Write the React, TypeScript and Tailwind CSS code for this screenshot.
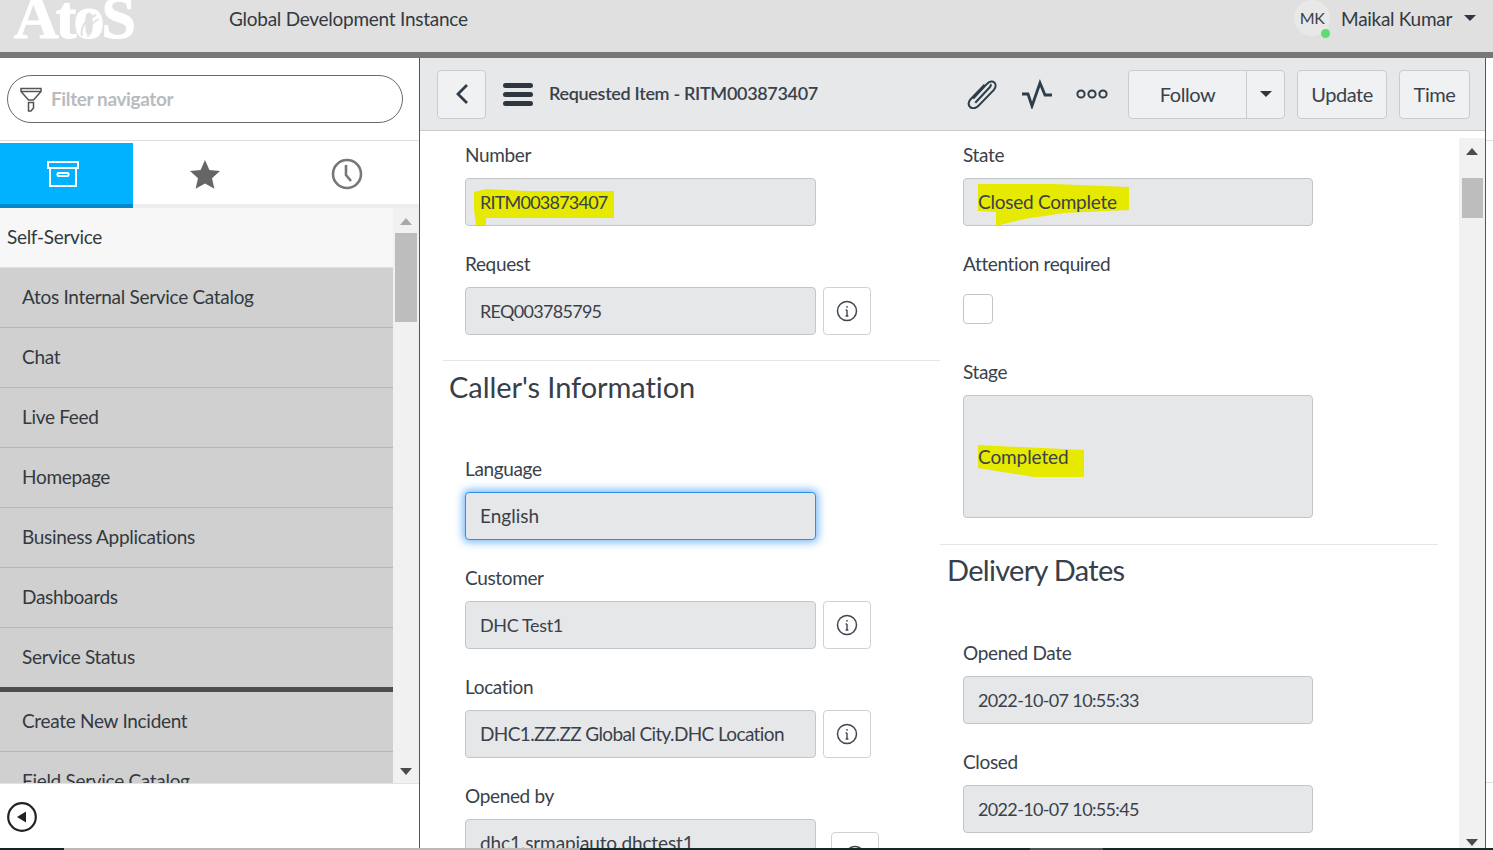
import React from "react";

const font = { fontFamily: '"Lato", "Noto Sans", sans-serif' };

function InfoBtn({ className = "" }: { className?: string }) {
  return (
    <div className={`w-12 h-12 shrink-0 bg-white border border-[#cfd2d5] rounded-[4px] flex items-center justify-center ${className}`}>
      <svg width="22" height="22" viewBox="0 0 22 22" fill="none" stroke="#3f4650" strokeWidth="1.5">
        <circle cx="11" cy="11" r="9.500" />
        <path d="M11 10v6M9.600 10H11M9.600 16h2.800" strokeWidth="1.400" />
        <circle cx="11" cy="6.800" r="0.900" fill="#3f4650" stroke="none" />
      </svg>
    </div>
  );
}

function Mark({ points, w, h }: { points: string; w: number; h: number }) {
  return (
    <svg className="absolute left-0 top-0" width={w} height={h} viewBox={`0 0 ${w} ${h}`}>
      <polygon points={points} fill="#e6e900" />
    </svg>
  );
}

function Input({
  value,
  mark,
  focus,
  tall,
  w = "w-[351px]",
  type = "text-[19px] tracking-[0px]",
}: {
  value: string;
  mark?: string;
  focus?: boolean;
  tall?: boolean;
  w?: string;
  type?: string;
}) {
  const border = focus
    ? "border-[#2f8fe6] shadow-[0_0_8px_2px_rgba(50,150,245,0.7)]"
    : "border-[#c3c6c9]";
  return (
    <div className={`relative ${w} ${tall ? "h-[123px]" : "h-12"} shrink-0 bg-[#e6e7e9] border ${border} rounded-[4px] flex items-center pl-[14px] pb-px leading-none text-[#3a414a] ${type}`}>
      {mark && <Mark points={mark} w={350} h={tall ? 123 : 48} />}
      <span className="relative whitespace-nowrap">{value}</span>
    </div>
  );
}

function Label({ children }: { children: React.ReactNode }) {
  return <div className="h-6 leading-6 text-[19px] text-[#3a414a] tracking-[-0.35px] mb-[11px] whitespace-nowrap">{children}</div>;
}

function Field({
  label,
  value,
  info,
  mark,
  focus,
  type,
}: {
  label: string;
  value: string;
  info?: boolean;
  mark?: string;
  focus?: boolean;
  type?: string;
}) {
  return (
    <div className="pl-[22px] mb-[26px]">
      <Label>{label}</Label>
      <div className="flex items-start gap-[7px]">
        <Input value={value} mark={mark} focus={focus} type={type} />
        {info && <InfoBtn />}
      </div>
    </div>
  );
}

function Up({ light }: { light?: boolean }) {
  return <div className={`w-0 h-0 border-l-[6px] border-r-[6px] border-b-[7px] border-l-transparent border-r-transparent ${light ? "border-b-[#a9a9a9]" : "border-b-[#4b4b4b]"}`} />;
}
function Down() {
  return <div className="w-0 h-0 border-l-[6px] border-r-[6px] border-t-[7px] border-l-transparent border-r-transparent border-t-[#4b4b4b]" />;
}

const navTop = ["Atos Internal Service Catalog", "Chat", "Live Feed", "Homepage", "Business Applications", "Dashboards", "Service Status"];

function NavItem({ label, last }: { label: string; last?: boolean }) {
  return (
    <div className={`${last ? "h-[59px]" : "h-[60px] border-b border-[#b5b7b9]"} shrink-0 bg-[#d0d0d0] flex items-center pl-[22px] text-[19px] text-[#33393f] tracking-[-0.3px] whitespace-nowrap`}>
      {label}
    </div>
  );
}

function Sidebar() {
  return (
    <aside className="w-[420px] shrink-0 h-full bg-white border-r border-[#555] flex flex-col">
      <div className="h-[83px] shrink-0 border-b border-[#ddd] pt-[17px] pl-[7px]">
        <div className="w-[396px] h-12 border border-[#6a6a6a] rounded-full flex items-center pl-[12px]">
          <svg width="22" height="25" viewBox="0 0 22 25" fill="none" stroke="#555" strokeWidth="1.500">
            <path d="M1 1.500h20v3L13.500 13H8.500L1 4.500z" />
            <path d="M1 4.500h20" />
            <path d="M8.500 15.500h5v5.500L11 24H8.500z" />
          </svg>
          <span className="ml-[9px] text-[19px] text-[#b9bcbf] tracking-[-0.38px] font-bold">Filter navigator</span>
        </div>
      </div>
      <div className="h-[2px] shrink-0 bg-white" />
      <div className="h-[65px] shrink-0 flex">
        <div className="w-[133px] bg-[#00b2ff] border-b-4 border-[#0088cc] flex items-center justify-center pr-[7px]">
          <svg width="32" height="28" viewBox="0 0 32 28" fill="none" stroke="#fff" strokeWidth="2">
            <rect x="1" y="2" width="30" height="6" />
            <path d="M3 8v18h26V8" />
            <rect x="10.500" y="13" width="11" height="3" rx="1" />
          </svg>
        </div>
        <div className="flex-1 border-b-4 border-[#eeeeee] flex items-center pl-[56px]">
          <svg width="32" height="30" viewBox="0 0 32 30">
            <path d="M16 1l4.400 10 10.600 1-8 7.200 2.400 10.600L16 24.400 6.600 29.800l2.400-10.600-8-7.200 10.600-1z" fill="#666" />
          </svg>
          <svg className="ml-[110px]" width="32" height="32" viewBox="0 0 32 32" fill="none" stroke="#777" strokeWidth="2.600">
            <circle cx="16" cy="16" r="14" />
            <path d="M15 7v10l5 6" />
          </svg>
        </div>
      </div>
      <div className="flex-1 flex min-h-0">
        <div className="w-[393px] flex flex-col overflow-hidden">
          <div className="h-[60px] shrink-0 bg-[#f7f7f7] border-b border-[#e0e0e0] flex items-center pl-[7px] text-[19px] text-[#33393f] tracking-[-0.3px]">Self-Service</div>
          {navTop.map((n, i) => (
            <NavItem key={n} label={n} last={i === navTop.length - 1} />
          ))}
          <div className="h-[5px] shrink-0 bg-[#4d4d4d]" />
          <NavItem label="Create New Incident" />
          <NavItem label="Field Service Catalog" />
        </div>
        <div className="flex-1 bg-[#f1f1f1] flex flex-col items-center pt-[10px] pb-[8px]">
          <Up light />
          <div className="w-[22px] h-[89px] mt-[8px] bg-[#bdbdbd]" />
          <div className="flex-1" />
          <Down />
        </div>
      </div>
      <div className="h-[65px] shrink-0 bg-white border-t border-[#e2e2e2] flex items-center pl-[7px] pt-[2px]">
        <svg width="30" height="30" viewBox="0 0 30 30" fill="none">
          <circle cx="15" cy="15" r="13.800" stroke="#222" strokeWidth="2.200" />
          <path d="M19 9.500v11L10 15z" fill="#222" />
        </svg>
      </div>
    </aside>
  );
}

function Btn({ children, className = "" }: { children: React.ReactNode; className?: string }) {
  return (
    <div className={`h-[49px] bg-[#f0f1f3] border border-[#c9ccce] rounded-[4px] flex items-center justify-center text-[20px] text-[#3a414a] tracking-[-0.45px] ${className}`}>
      {children}
    </div>
  );
}

function Toolbar() {
  return (
    <div className="h-[73px] shrink-0 bg-[#e6e8ea] border-b border-[#c8cacc] flex items-center pl-[17px] pr-[15px]">
      <Btn className="w-[49px]">
        <svg width="14" height="22" viewBox="0 0 14 22" fill="none" stroke="#2e3d49" strokeWidth="2.800">
          <path d="M12 2L3 11l9 9" />
        </svg>
      </Btn>
      <div className="ml-[17px] w-[30px] flex flex-col gap-[4px]">
        <div className="h-[5px] bg-[#2e3640] rounded-sm" />
        <div className="h-[5px] bg-[#2e3640] rounded-sm" />
        <div className="h-[5px] bg-[#2e3640] rounded-sm" />
      </div>
      <div className="ml-4 mb-[2px] text-[18px] font-semibold text-[#3a414a] tracking-[-0.32px] whitespace-nowrap">Requested Item - RITM003873407</div>
      <div className="flex-1" />
      <svg width="32" height="30" viewBox="3 1 29 29" fill="none" stroke="#2e3d49" strokeWidth="2">
        <path d="M9 20L22.500 5.500c2.500-2.500 5.500-2.500 7-1s1.500 4.500-.5 7L14 27c-2.500 2.500-6 3-8 1s-1.500-5 .5-7.500L20 6.500M11 24l14-15c1.300-1.400 1-2.500.5-3" />
      </svg>
      <svg className="ml-[23px]" width="32" height="30" viewBox="0 0 32 30" fill="none" stroke="#2e3d49" strokeWidth="2.800" strokeLinejoin="miter">
        <path d="M1 15h6l4 12 8-23 5 12h7" />
      </svg>
      <svg className="ml-[23px]" width="32" height="12" viewBox="0 0 32 12" fill="none" stroke="#2e3d49" strokeWidth="2">
        <circle cx="5" cy="6" r="3.600" />
        <circle cx="16" cy="6" r="3.600" />
        <circle cx="27" cy="6" r="3.600" />
      </svg>
      <Btn className="ml-5 w-[157px] !justify-start">
        <div className="w-[118px] h-full flex items-center justify-center border-r border-[#c9ccce]">Follow</div>
        <div className="flex-1 flex justify-center">
          <div className="w-0 h-0 border-l-[6px] border-r-[6px] border-t-[6px] border-l-transparent border-r-transparent border-t-[#2e3640]" />
        </div>
      </Btn>
      <Btn className="ml-3 w-[90px]">Update</Btn>
      <Btn className="ml-3 w-[71px]">Time</Btn>
    </div>
  );
}

function Form() {
  return (
    <div className="flex-1 min-h-0 flex relative overflow-hidden">
      <div className="w-[23px] shrink-0" />
      <div className="w-[497px] shrink-0 pt-[12px]">
        <Field label="Number" value="RITM003873407" type="text-[18px] tracking-[-0.78px]" mark="8,13 20,10 60,12 148,12 148,39 20,39 20,46 10,46 8,30" />
        <Field label="Request" value="REQ003785795" type="text-[18px] tracking-[-0.7px]" info />
        <div className="border-t border-[#e5e5e5] -mt-px h-[84px] pl-[6px] pt-[8px] text-[29px] leading-[36px] text-[#37404a] tracking-[-0.07px] whitespace-nowrap">
          Caller's Information
        </div>
        <div className="mt-[13px]" />
        <Field label="Language" value="English" focus />
        <Field label="Customer" value="DHC Test1" type="text-[18px] tracking-[-0.37px]" info />
        <Field label="Location" value="DHC1.ZZ.ZZ Global City.DHC Location" type="text-[19px] tracking-[-0.63px]" info />
        <div className="pl-[22px]">
          <Label>Opened by</Label>
          <div className="flex items-start gap-[7px]">
            <Input value="dhc1.srmapiauto.dhctest1" type="text-[19px] tracking-[-0.12px]" />
            <InfoBtn className="ml-2 mt-[13px]" />
          </div>
        </div>
      </div>
      <div className="w-[498px] shrink-0 pt-[12px]">
        <div className="pl-[23px]">
          <Label>State</Label>
          <div className="mb-[26px]">
            <Input w="w-[350px]" value="Closed Complete" type="text-[19px] tracking-[-0.25px]" mark="14,5 90,5 165,8 165,31 100,34 60,40 32,47 32,33 14,32" />
          </div>
          <Label>Attention required</Label>
          <div className="w-[30px] h-[30px] mt-[18px] bg-white border border-[#c3c6c9] rounded-[4px] mb-[36px]" />
          <Label>Stage</Label>
          <Input w="w-[350px]" tall value="Completed" type="text-[19px] tracking-[-0.1px]" mark="14,49 120,54 120,81 70,81 14,72" />
        </div>
        <div className="border-t border-[#e5e5e5] mt-[26px] h-[97px] pl-[7px] pt-[7px] text-[29px] leading-[36px] text-[#37404a] tracking-[-0.7px]">
          Delivery Dates
        </div>
        <div className="pl-[23px]">
          <Label>Opened Date</Label>
          <div className="mb-[26px]">
            <Input w="w-[350px]" value="2022-10-07 10:55:33" type="text-[18px] tracking-[-0.65px]" />
          </div>
          <Label>Closed</Label>
          <Input w="w-[350px]" value="2022-10-07 10:55:45" type="text-[18px] tracking-[-0.65px]" />
        </div>
      </div>
      <div className="flex-1" />
      <div className="w-[26px] shrink-0 bg-[#f1f1f1] flex flex-col items-center pt-[10px] pb-[2px] mt-[7px]">
        <Up />
        <div className="w-[21px] h-10 mt-[23px] bg-[#bdbdbd]" />
        <div className="flex-1" />
        <Down />
      </div>
    </div>
  );
}

export default function App() {
  return (
    <div className="w-[1493px] h-[850px] overflow-hidden flex flex-col bg-white" style={font}>
      <header className="h-[52px] shrink-0 bg-[#e0e0e0] flex items-start overflow-hidden relative">
        <div className="relative w-[229px] shrink-0 pl-[14px] -mt-[13px] text-[62px] leading-[60px] font-bold text-white tracking-[-3px] whitespace-nowrap [-webkit-text-stroke:1px_white]" style={{ fontFamily: '"Liberation Serif", serif' }}>
          AtoS
          <svg className="absolute left-[76px] top-[23px]" width="26" height="30" viewBox="0 0 26 30" fill="none">
            <path d="M6 26C4 17 10 9 20 5" stroke="#e0e0e0" strokeWidth="2" />
            <path d="M12 27C11 20 15 13 23 9" stroke="#e0e0e0" strokeWidth="1.500" />
          </svg>
        </div>
        <div className="mt-[7px] text-[19px] leading-6 text-[#33393f] tracking-[-0.26px] whitespace-nowrap">Global Development Instance</div>
        <div className="flex-1" />
        <div className="relative w-9 h-9 rounded-full bg-[#e8e8e8] flex items-center justify-center text-[16px] text-[#3a414a] tracking-[-0.3px] mr-[12px]">
          MK
          <div className="absolute right-0 bottom-[-2px] w-[9px] h-[9px] rounded-full bg-[#5fdc71]" />
        </div>
        <div className="mt-[7px] -ml-px text-[19px] leading-6 text-[#33393f] tracking-[-0.3px] whitespace-nowrap">Maikal Kumar</div>
        <div className="mt-[15px] ml-3 mr-[17px] w-0 h-0 border-l-[6px] border-r-[6px] border-t-[6px] border-l-transparent border-r-transparent border-t-[#2e3640]" />
      </header>
      <div className="h-[6px] shrink-0 bg-[#777777]" />
      <div className="flex-1 min-h-0 flex">
        <Sidebar />
        <main className="w-[1066px] shrink-0 h-full flex flex-col border-r border-[#555]">
          <Toolbar />
          <Form />
        </main>
        <div className="flex-1 flex flex-col">
          <div className="h-[83px] border-b border-[#ddd]" />
          <div className="flex-1 border-b border-[#ddd]" />
          <div className="h-[65px]" />
        </div>
      </div>
      <div className="h-[2px] shrink-0 flex">
        <div className="w-16 bg-[#16242a]" />
        <div className="w-[516px] bg-[#b9b9b9]" />
        <div className="w-[450px] bg-[#16282c]" />
        <div className="w-[73px] bg-[#4a5558]" />
        <div className="flex-1 bg-[#16282c]" />
      </div>
    </div>
  );
}
